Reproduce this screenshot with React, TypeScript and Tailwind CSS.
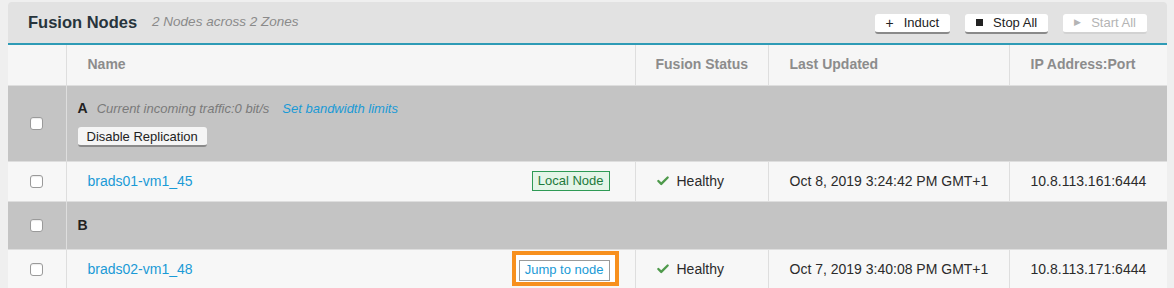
import { Check } from 'lucide-react';

const font = { fontFamily: '"Liberation Sans", Arial, Helvetica, sans-serif' };

function Box() {
  return (
    <span className="inline-block w-[13px] h-[13px] rounded-[3px] border border-[#9a9a9a] bg-white align-middle shadow-[inset_0_1px_1px_rgba(0,0,0,0.08)]" />
  );
}

function HeadButton({ icon, label, disabled }: { icon: React.ReactNode; label: string; disabled?: boolean }) {
  return (
    <button
      className={`h-[20px] px-[11px] flex items-center gap-[10px] rounded-[3px] bg-white text-[13px] leading-none border-b-2 ${
        disabled ? 'text-[#b4b4b4] border-[#d2d2d2] bg-[#f1f1f1]' : 'text-[#222] border-[#8a8a8a]'
      }`}
    >
      {icon}
      {label}
    </button>
  );
}

function NodeRow({ name, badge, updated, ip }: { name: string; badge: React.ReactNode; updated: string; ip: string }) {
  return (
    <tr className="bg-[#f7f7f7] text-[14px] text-[#2b2b2b]">
      <td className="h-[40px] border-r border-b border-[#dedede] text-center">
        <Box />
      </td>
      <td className="border-r border-b border-[#dedede] pl-[21px] pr-[25px]">
        <div className="flex items-center justify-between">
          <a className="text-[#1a9ad6]">{name}</a>
          {badge}
        </div>
      </td>
      <td className="border-r border-b border-[#dedede] pl-[20px]">
        <span className="flex items-center gap-[7px]">
          <Check className="w-[14px] h-[14px] text-[#4f9a4c]" strokeWidth={4} />
          Healthy
        </span>
      </td>
      <td className="border-r border-b border-[#dedede] pl-[21px]">{updated}</td>
      <td className="border-b border-[#dedede] pl-[21px]">{ip}</td>
    </tr>
  );
}

export default function App() {
  return (
    <div className="w-[1174px] h-[288px] bg-[#efefef] pt-[2px] pl-[8px] overflow-hidden" style={font}>
      <div className="w-[1159px] rounded-t-[4px] overflow-hidden">
        {/* Header */}
        <div className="h-[43px] bg-[#e2e2e2] flex items-center pl-[20px] pr-[20px] border-b-2 border-[#2e9bb6]">
          <h1 className="text-[16.5px] font-bold text-[#27343c]">Fusion Nodes</h1>
          <span className="ml-[15px] text-[13.5px] italic text-[#8a8a8a]">2 Nodes across 2 Zones</span>
          <div className="ml-auto flex items-center gap-[15px] pt-[2px]">
            <HeadButton icon={<span className="text-[14px]">+</span>} label="Induct" />
            <HeadButton icon={<span className="w-[7px] h-[7px] bg-[#222]" />} label="Stop All" />
            <HeadButton icon={<span className="text-[9px]">▶</span>} label="Start All" disabled />
          </div>
        </div>

        <table className="w-[1159px] table-fixed border-collapse">
          <colgroup>
            <col className="w-[58px]" />
            <col className="w-[569px]" />
            <col className="w-[133px]" />
            <col className="w-[241px]" />
            <col className="w-[158px]" />
          </colgroup>
          <thead>
            <tr className="bg-[#f6f6f6] text-[14px] font-bold text-[#8c8c8c] text-left">
              <th className="h-[40px] border-r border-b border-[#dedede]" />
              <th className="border-r border-b border-[#dedede] pl-[21px]">Name</th>
              <th className="border-r border-b border-[#dedede] pl-[20px]">Fusion Status</th>
              <th className="border-r border-b border-[#dedede] pl-[21px]">Last Updated</th>
              <th className="border-b border-[#dedede] pl-[21px]">IP Address:Port</th>
            </tr>
          </thead>
          <tbody>
            <tr className="bg-[#c4c4c4]">
              <td className="h-[76px] border-r border-b border-[#dedede] text-center">
                <Box />
              </td>
              <td colSpan={4} className="border-b border-[#dedede] pl-[11px]">
                <div className="flex items-center gap-[9px] text-[13px]">
                  <span className="font-bold text-[14px] text-[#222]">A</span>
                  <span className="italic text-[#7a7a7a]">Current incoming traffic:0 bit/s</span>
                  <a className="italic text-[#1a9ad6] ml-[4px]">Set bandwidth limits</a>
                </div>
                <button className="mt-[8px] h-[20px] px-[9px] bg-[#f5f5f5] rounded-[3px] border-b-2 border-[#8a8a8a] text-[13px] text-[#222] leading-none">
                  Disable Replication
                </button>
              </td>
            </tr>
            <NodeRow
              name="brads01-vm1_45"
              badge={
                <span className="h-[20px] px-[5px] flex items-center border border-[#2e9a55] bg-[#e4f5e8] text-[#1d7a3b] text-[13px]">
                  Local Node
                </span>
              }
              updated="Oct 8, 2019 3:24:42 PM GMT+1"
              ip="10.8.113.161:6444"
            />
            <tr className="bg-[#c4c4c4]">
              <td className="h-[48px] border-r border-b border-[#dedede] text-center">
                <Box />
              </td>
              <td colSpan={4} className="border-b border-[#dedede] pl-[11px]">
                <span className="font-bold text-[14px] text-[#222]">B</span>
              </td>
            </tr>
            <NodeRow
              name="brads02-vm1_48"
              badge={
                <span className="-mr-[9px] -mt-[2px] pt-[5px] pb-[1px] pl-[3px] pr-[5px] border-[4px] border-[#f7901e] bg-white">
                  <span className="h-[21px] px-[5px] flex items-center border border-[#9a9a9a] bg-white text-[#1a9ad6] text-[13px]">
                    Jump to node
                  </span>
                </span>
              }
              updated="Oct 7, 2019 3:40:08 PM GMT+1"
              ip="10.8.113.171:6444"
            />
          </tbody>
        </table>
      </div>
    </div>
  );
}
